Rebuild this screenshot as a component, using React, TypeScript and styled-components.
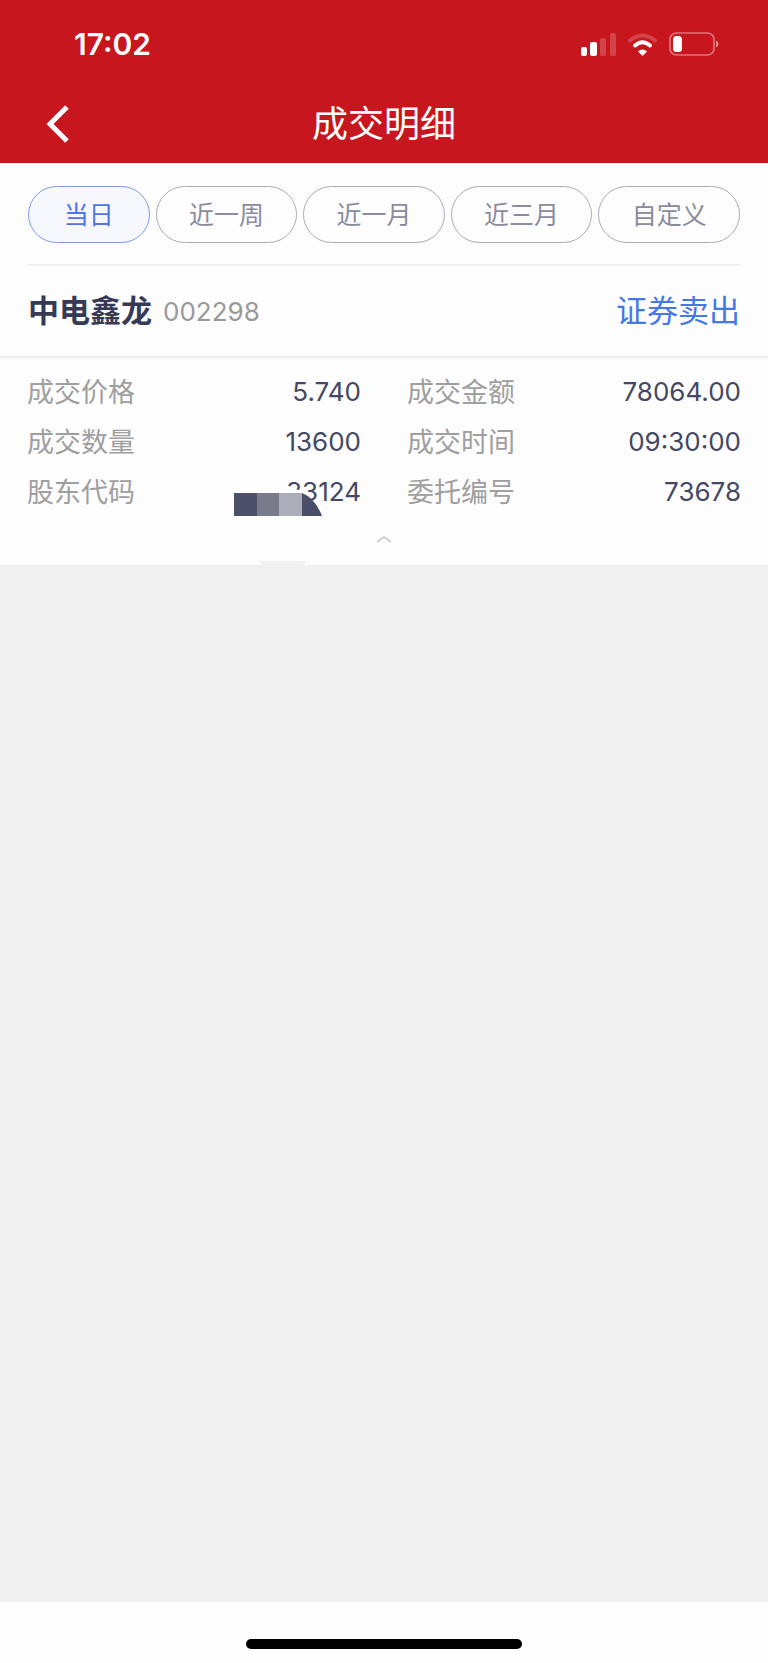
import React, { useState } from 'react';
import styled, { createGlobalStyle } from 'styled-components';

const GlobalStyle = createGlobalStyle`
  * {
    box-sizing: border-box;
  }

  body {
    margin: 0;
    background: #f0f0f0;
    font-family: Inter, 'Noto Sans CJK SC', sans-serif;
  }

  button {
    font-family: inherit;
    cursor: pointer;
  }
`;

const Page = styled.div`
  min-height: 100vh;
  display: flex;
  flex-direction: column;
`;

const Header = styled.header`
  background: #c7161d;
  color: #ffffff;
`;

const StatusBar = styled.div`
  height: 87px;
  padding: 0 48px 0 74px;
  display: flex;
  align-items: center;
  justify-content: space-between;
`;

const Time = styled.span`
  font-size: 30px;
  font-weight: 600;
`;

const NavBar = styled.div`
  height: 76px;
  padding: 0 38px 2px;
  display: grid;
  grid-template-columns: 40px 1fr 40px;
  align-items: center;
`;

const BackButton = styled.button`
  height: 48px;
  padding: 0;
  border: none;
  background: none;
  color: inherit;
  display: flex;
  align-items: center;
  justify-content: center;
`;

const Title = styled.h1`
  margin: 0;
  font-size: 36px;
  font-weight: 400;
  line-height: 48px;
  text-align: center;
`;

const Tabs = styled.nav`
  margin: 0 27px;
  padding: 23px 1px 21px;
  border-bottom: 2px solid #eeeef0;
  display: flex;
  gap: 6px;
`;

const Tab = styled.button<{ $active: boolean; $grow: number }>`
  flex: ${({ $grow }) => $grow} 1 0;
  height: 57px;
  padding: 0;
  border: 1px solid ${({ $active }) => ($active ? '#7f9af0' : '#abacba')};
  border-radius: 29px;
  background: ${({ $active }) => ($active ? '#f6f8fd' : 'transparent')};
  color: ${({ $active }) => ($active ? '#4f74e8' : '#8a8c9d')};
  font-size: 25px;
  line-height: 36px;
`;

const Card = styled.main`
  background: #fdfdfe;
`;

const StockRow = styled.div`
  height: 92px;
  padding: 0 28px;
  border-bottom: 2px solid #eeeef0;
  display: flex;
  align-items: center;
`;

const StockName = styled.h2`
  margin: 0;
  color: #363a57;
  font-size: 31px;
  font-weight: 700;
  line-height: 44px;
`;

const StockCode = styled.span`
  margin-left: 11px;
  color: #999999;
  font-size: 26px;
`;

const Side = styled.span`
  margin-left: auto;
  color: #4477e8;
  font-size: 31px;
  line-height: 44px;
`;

const Details = styled.dl`
  margin: 0;
  padding: 9px 27px 0;
  display: grid;
  grid-template-columns: 1fr 1fr;
  column-gap: 46px;
`;

const Detail = styled.div`
  position: relative;
  height: 50px;
  display: flex;
  align-items: center;
  justify-content: space-between;
`;

const Label = styled.dt`
  color: #9f9f9f;
  font-size: 27px;
  line-height: 41px;
`;

const Value = styled.dd`
  margin: 0;
  color: #444864;
  font-size: 26px;
  line-height: 32px;
`;

/* Sits on top of the account number */
const Mask = styled.svg`
  position: absolute;
  top: 0;
  right: 0;
`;

const CollapseButton = styled.button`
  width: 100%;
  height: 48px;
  padding: 0 0 4px;
  border: none;
  background: none;
  display: flex;
  align-items: center;
  justify-content: center;
`;

const Footer = styled.footer`
  height: 61px;
  margin-top: auto;
  padding-top: 37px;
  background: #fdfdfe;
`;

const HomeIndicator = styled.div`
  width: 36%;
  height: 10px;
  margin: 0 auto;
  border-radius: 5px;
  background: #000000;
`;

const ranges = [
  { label: '当日', grow: 6 },
  { label: '近一周', grow: 7 },
  { label: '近一月', grow: 7 },
  { label: '近三月', grow: 7 },
  { label: '自定义', grow: 7 },
];

const details = [
  { label: '成交价格', value: '5.740' },
  { label: '成交金额', value: '78064.00' },
  { label: '成交数量', value: '13600' },
  { label: '成交时间', value: '09:30:00' },
  { label: '股东代码', value: '33124', masked: true },
  { label: '委托编号', value: '73678' },
];

const StatusIcons = () => (
  <svg width="140" height="26" viewBox="0 0 140 26" fill="#fff" aria-hidden="true">
    <rect x="1" y="16" width="6" height="9" rx="2" />
    <rect x="10" y="11" width="7" height="14" rx="2" />
    <rect x="20" y="7" width="6" height="18" rx="2" opacity="0.2" />
    <rect x="30" y="2" width="6" height="23" rx="2" opacity="0.2" />
    <path d="M50 9.500Q62.500 -0.500 75 9.500" fill="none" stroke="#fff" strokeWidth="4" strokeLinecap="round" opacity="0.2" />
    <path d="M55 14.500Q62.500 8 70 14.500" fill="none" stroke="#fff" strokeWidth="4" strokeLinecap="round" />
    <path d="M58 20.500Q62.500 16.500 67 20.500L62.500 25Z" />
    <rect x="90" y="2" width="44" height="22" rx="6.500" fill="none" stroke="#fff" strokeWidth="1.700" opacity="0.4" />
    <rect x="93" y="5" width="9" height="16" rx="3.500" />
    <path d="M136 9.500Q138.500 10.500 138.500 13T136 16.500Z" opacity="0.5" />
  </svg>
);

const AccountMask = () => (
  <Mask width="180" height="100" viewBox="0 0 180 100" aria-hidden="true">
    <path
      d="M12 12C20 0 50 0 70 4L100 15Q112 22 124 25L141 48Q145 70 128 82L122 93H77L66 84L30 64Q10 50 8 30Z"
      fill="#fdfdfe"
    />
    <rect x="53" y="26" width="23" height="23" fill="#4d5069" />
    <rect x="76" y="26" width="22" height="23" fill="#797b8d" />
    <rect x="98" y="26" width="23" height="23" fill="#acadb9" />
    <path d="M121 26Q134 31 141 49H121Z" fill="#4b4e69" />
    <path d="M77 94H125L121 100H84Z" fill="#f0f0f0" />
  </Mask>
);

const App = () => {
  const [active, setActive] = useState('当日');

  return (
    <>
      <GlobalStyle />
      <Page>
        <Header>
          <StatusBar>
            <Time>17:02</Time>
            <StatusIcons />
          </StatusBar>
          <NavBar>
            <BackButton aria-label="返回">
              <svg width="26" height="40" viewBox="0 0 26 40" fill="none" stroke="#fff" strokeWidth="5">
                <path d="M22 3L5 20L22 37" />
              </svg>
            </BackButton>
            <Title>成交明细</Title>
          </NavBar>
        </Header>
        <Card>
          <Tabs>
            {ranges.map((range) => (
              <Tab
                key={range.label}
                $grow={range.grow}
                $active={range.label === active}
                onClick={() => setActive(range.label)}
              >
                {range.label}
              </Tab>
            ))}
          </Tabs>
          <StockRow>
            <StockName>中电鑫龙</StockName>
            <StockCode>002298</StockCode>
            <Side>证券卖出</Side>
          </StockRow>
          <Details>
            {details.map((item) => (
              <Detail key={item.label}>
                <Label>{item.label}</Label>
                <Value>{item.value}</Value>
                {item.masked && <AccountMask />}
              </Detail>
            ))}
          </Details>
          <CollapseButton aria-label="收起">
            <svg width="16" height="8" viewBox="0 0 16 8" fill="none" stroke="#c0c0c4" strokeWidth="1.500">
              <path d="M1 7L8 2L15 7" />
            </svg>
          </CollapseButton>
        </Card>
        <Footer>
          <HomeIndicator />
        </Footer>
      </Page>
    </>
  );
};

export default App;
